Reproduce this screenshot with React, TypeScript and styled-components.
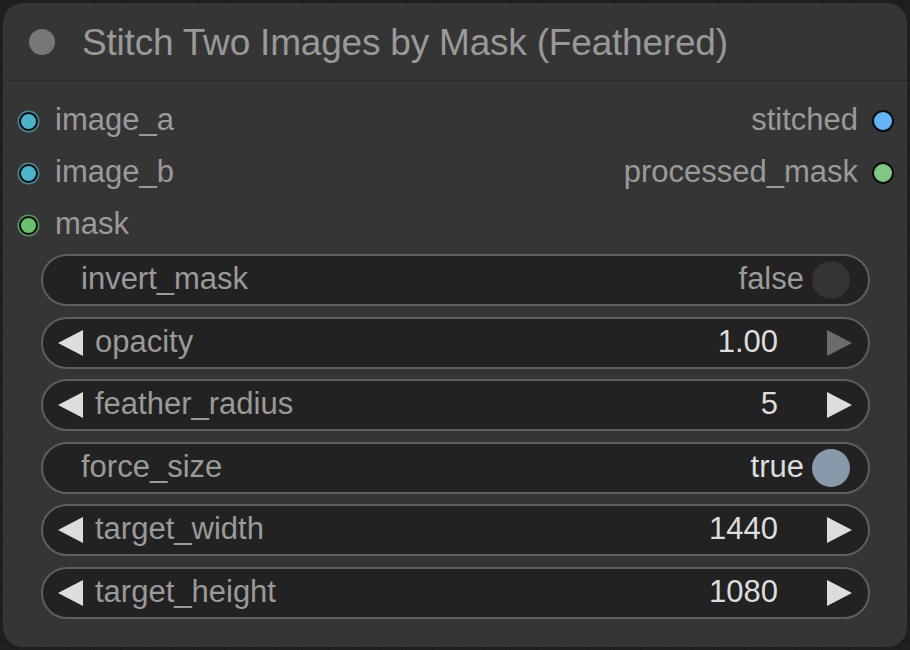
import React from "react";
import styled, { createGlobalStyle } from "styled-components";

const Global = createGlobalStyle`
  html, body { margin: 0; padding: 0; }
  body {
    width: 910px;
    height: 650px;
    overflow: hidden;
    background-color: #1f1f1f;
    background-image:
      linear-gradient(#181818 1px, transparent 1px),
      linear-gradient(90deg, #181818 1px, transparent 1px);
    background-size: 26px 26px;
    background-position: -10px -10px;
    font-family: "Liberation Sans", Arial, sans-serif;
  }
`;

const Page = styled.div`
  padding: 3px;
`;

const Node = styled.div`
  width: 904px;
  height: 644px;
  box-sizing: border-box;
  background: #353535;
  border-radius: 20px;
  display: flex;
  flex-direction: column;
  overflow: hidden;
`;

const Header = styled.div`
  height: 77px;
  display: flex;
  align-items: center;
  padding-left: 26px;
  gap: 27px;
  border-bottom: 1.5px solid #2b2b2b;
`;

const TitleDot = styled.div`
  width: 26px;
  height: 26px;
  border-radius: 50%;
  background: #777777;
  margin-top: 1px;
`;

const Title = styled.div`
  font-size: 37px;
  color: #999999;
  margin-top: 2px;
  letter-spacing: -0.2px;
`;

const Body = styled.div`
  padding: 14px 37px 0 0;
  display: flex;
  flex-direction: column;
`;

const SlotRow = styled.div`
  height: 52px;
  display: flex;
  align-items: center;
  justify-content: space-between;
  margin-right: -37px;
`;

const Slot = styled.div<{ $out?: boolean }>`
  display: flex;
  align-items: center;
  flex-direction: ${(p) => (p.$out ? "row-reverse" : "row")};
  gap: ${(p) => (p.$out ? "14px" : "17px")};
  padding: ${(p) => (p.$out ? "0 13px 0 0" : "0 0 0 16px")};
`;

const Dot = styled.div<{ $color: string; $out?: boolean }>`
  width: ${(p) => (p.$out ? "18px" : "15px")};
  height: ${(p) => (p.$out ? "18px" : "15px")};
  border-radius: 50%;
  background: ${(p) => p.$color};
  border: 2px solid #0d0d0d;
  box-shadow: ${(p) => (p.$out ? "none" : `0 0 0 1.5px ${p.$color}aa`)};
`;

const SlotLabel = styled.span`
  font-size: 31px;
  color: #9a9a9a;
  line-height: 1;
  margin-top: -3px;
`;

const Widgets = styled.div`
  margin-top: 3px;
  padding-left: 38px;
  display: flex;
  flex-direction: column;
  gap: 10.6px;
`;

const Pill = styled.div`
  height: 52px;
  box-sizing: border-box;
  border: 2px solid #5e5e5e;
  background: #222222;
  border-radius: 26px;
  display: flex;
  align-items: center;
  padding: 0 15px 0 15px;
`;

const Arrow = styled.svg<{ $dim?: boolean }>`
  width: 26px;
  height: 26px;
  flex: none;
  fill: ${(p) => (p.$dim ? "#6b6b6b" : "#dddddd")};
`;

const Label = styled.span<{ $toggle?: boolean }>`
  font-size: 31px;
  color: #9a9a9a;
  margin-left: ${(p) => (p.$toggle ? "23px" : "11px")};
  margin-top: -2px;
  flex: 1;
`;

const Value = styled.span<{ $muted?: boolean }>`
  font-size: 31px;
  color: ${(p) => (p.$muted ? "#9a9a9a" : "#dddddd")};
  margin-top: -2px;
`;

const NumValue = styled(Value)`
  margin-right: 49px;
`;

const Knob = styled.div<{ $on?: boolean }>`
  width: 38px;
  height: 38px;
  border-radius: 50%;
  background: ${(p) => (p.$on ? "#8999ab" : "#333333")};
  margin-left: 8px;
  margin-right: 3px;
`;

const LeftArrow = () => (
  <Arrow viewBox="0 0 26 26">
    <polygon points="0,13 25,0 25,26" />
  </Arrow>
);

const RightArrow = ({ dim }: { dim?: boolean }) => (
  <Arrow viewBox="0 0 26 26" $dim={dim}>
    <polygon points="25,13 0,0 0,26" />
  </Arrow>
);

const NumberWidget = ({ label, value, maxed }: { label: string; value: string; maxed?: boolean }) => (
  <Pill>
    <LeftArrow />
    <Label>{label}</Label>
    <NumValue>{value}</NumValue>
    <RightArrow dim={maxed} />
  </Pill>
);

const ToggleWidget = ({ label, on }: { label: string; on: boolean }) => (
  <Pill>
    <Label $toggle>{label}</Label>
    <Value $muted={!on}>{on ? "true" : "false"}</Value>
    <Knob $on={on} />
  </Pill>
);

export default function App() {
  return (
    <>
      <Global />
      <Page>
        <Node>
          <Header>
            <TitleDot />
            <Title>Stitch Two Images by Mask (Feathered)</Title>
          </Header>
          <Body>
            <SlotRow>
              <Slot>
                <Dot $color="#4cb3c9" />
                <SlotLabel>image_a</SlotLabel>
              </Slot>
              <Slot $out>
                <Dot $color="#64b5f6" $out />
                <SlotLabel>stitched</SlotLabel>
              </Slot>
            </SlotRow>
            <SlotRow>
              <Slot>
                <Dot $color="#4cb3c9" />
                <SlotLabel>image_b</SlotLabel>
              </Slot>
              <Slot $out>
                <Dot $color="#81c784" $out />
                <SlotLabel>processed_mask</SlotLabel>
              </Slot>
            </SlotRow>
            <SlotRow>
              <Slot>
                <Dot $color="#6cc16f" />
                <SlotLabel>mask</SlotLabel>
              </Slot>
            </SlotRow>
            <Widgets>
              <ToggleWidget label="invert_mask" on={false} />
              <NumberWidget label="opacity" value="1.00" maxed />
              <NumberWidget label="feather_radius" value="5" />
              <ToggleWidget label="force_size" on />
              <NumberWidget label="target_width" value="1440" />
              <NumberWidget label="target_height" value="1080" />
            </Widgets>
          </Body>
        </Node>
      </Page>
    </>
  );
}
